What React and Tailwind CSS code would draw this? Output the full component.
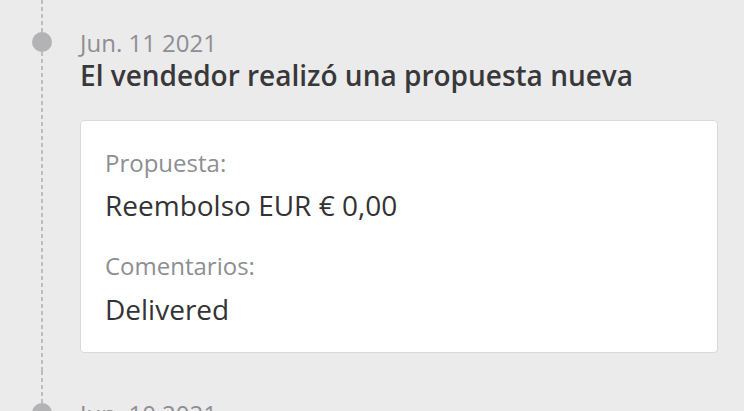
import React from "react";

const events = [
  {
    date: "Jun. 11 2021",
    title: "El vendedor realizó una propuesta nueva",
    fields: [
      { label: "Propuesta:", value: "Reembolso EUR € 0,00" },
      { label: "Comentarios:", value: "Delivered" },
    ],
  },
  {
    date: "Jun. 10 2021",
    title: "",
    fields: [],
  },
];

const Dashes = ({ className = "" }) => (
  <div
    className={`w-[2px] bg-[repeating-linear-gradient(to_bottom,#bdbdbd_0px,#bdbdbd_4px,transparent_4px,transparent_7px)] ${className}`}
  ></div>
);

const TimelineItem = ({ item }) => (
  <div className="flex">
    {/* Rail */}
    <div className="w-[80px] shrink-0 flex flex-col items-center pl-[4px]">
      <Dashes className="h-[32px]" />
      <div className="size-[20px] rounded-full bg-[#b3b3b6] shrink-0"></div>
      <Dashes className="flex-1" />
    </div>

    {/* Content */}
    <div className="flex-1 pt-[28px] pr-[26px] pb-[18px]">
      <p className="text-[24px] leading-[30px] text-[#8e8e93]">{item.date}</p>
      {item.title && (
        <h3 className="text-[28px] leading-[34px] font-semibold text-[#38383a]">
          {item.title}
        </h3>
      )}
      {item.fields.length > 0 && (
        <div className="mt-[28px] bg-white border border-[#d9d9d9] rounded-[4px] px-[24px] pt-[27px] pb-[25px]">
          {item.fields.map((f, i) => (
            <div key={f.label} className={i > 0 ? "mt-[28px]" : ""}>
              <p className="text-[24px] leading-[30px] text-[#8e8e93]">{f.label}</p>
              <p
                className={`${i > 0 ? "mt-[10px]" : "mt-[9px]"} text-[28px] leading-[36px] text-[#333335]`}
              >
                {f.value}
              </p>
            </div>
          ))}
        </div>
      )}
    </div>
  </div>
);

export default function App() {
  return (
    <div className="w-[744px] h-[411px] overflow-hidden bg-[#ebebeb] font-['Open_Sans',sans-serif]">
      {events.map((e) => (
        <TimelineItem key={e.date} item={e} />
      ))}
    </div>
  );
}
